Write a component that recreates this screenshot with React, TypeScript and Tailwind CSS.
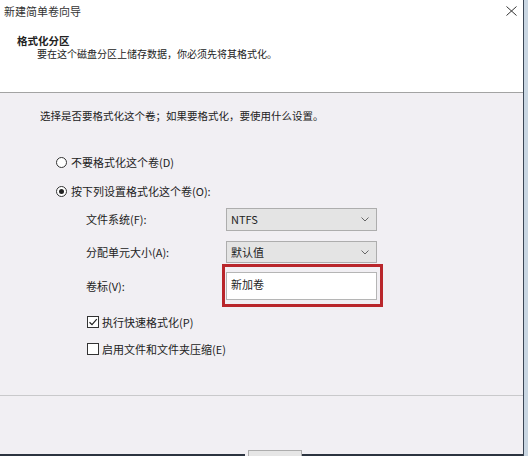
const font = { fontFamily: '"Microsoft YaHei", "Noto Sans CJK SC", "Noto Sans", sans-serif' }

function Radio({ checked }: { checked?: boolean }) {
  return (
    <span className="w-[11px] h-[11px] rounded-full border border-[#333] bg-white flex items-center justify-center">
      {checked && <span className="w-[5px] h-[5px] rounded-full bg-[#222]" />}
    </span>
  )
}

function Check({ checked }: { checked?: boolean }) {
  return (
    <span className="w-[12px] h-[12px] border border-[#333] bg-white flex items-center justify-center">
      {checked && (
        <svg width="10" height="10" viewBox="0 0 10 10">
          <path d="M1.5 5.2 L4 7.6 L8.8 2.2" fill="none" stroke="#222" strokeWidth="1.2" />
        </svg>
      )}
    </span>
  )
}

function Select({ value, h }: { value: string; h: string }) {
  return (
    <div className={`w-[151px] ${h} bg-[#e4e4e4] border border-[#adadad] flex items-center justify-between pl-[4px] pr-[7px]`}>
      <span className="text-[11px] text-[#222]">{value}</span>
      <svg width="8" height="5" viewBox="0 0 8 5">
        <path d="M0.5 0.5 L4 4 L7.5 0.5" fill="none" stroke="#666" strokeWidth="1" />
      </svg>
    </div>
  )
}

export default function App() {
  return (
    <div className="w-[528px] h-[456px] flex overflow-hidden text-[#222]" style={font}>
      <div className="w-[523px] flex flex-col">
        {/* title bar */}
        <div className="h-[22px] bg-white flex items-center justify-between pl-[4px] pr-[6px]">
          <span className="text-[11px] text-[#333]">新建简单卷向导</span>
          <svg width="11" height="10" viewBox="0 0 11 10">
            <path d="M0.5 0.5 L10.5 9.5 M10.5 0.5 L0.5 9.5" stroke="#333" strokeWidth="1" />
          </svg>
        </div>
        {/* header */}
        <div className="h-[71px] bg-white pt-[13px] pl-[17px] border-b border-[#a3a3a3]">
          <div className="text-[10.5px] leading-[12px] font-bold">格式化分区</div>
          <div className="text-[10px] leading-[14px] pl-[20px]">要在这个磁盘分区上储存数据，你必须先将其格式化。</div>
        </div>
        {/* body */}
        <div className="h-[303px] bg-[#f1eff3] flex flex-col border-b border-[#c9c9cb]">
          <div className="mt-[17px] pl-[40px] text-[10.5px] leading-[12px]">选择是否要格式化这个卷；如果要格式化，要使用什么设置。</div>
          <label className="mt-[33px] pl-[56px] h-[14px] flex items-center gap-[4px] text-[11px]">
            <Radio />
            <span>不要格式化这个卷(D)</span>
          </label>
          <label className="mt-[15px] pl-[56px] h-[14px] flex items-center gap-[4px] text-[11px]">
            <Radio checked />
            <span>按下列设置格式化这个卷(O):</span>
          </label>
          <div className="mt-[10px] pl-[86px] flex items-center">
            <span className="w-[140px] text-[11px]">文件系统(F):</span>
            <Select value="NTFS" h="h-[23px]" />
          </div>
          <div className="mt-[10px] pl-[86px] flex items-center">
            <span className="w-[140px] text-[11px]">分配单元大小(A):</span>
            <Select value="默认值" h="h-[22px]" />
          </div>
          <div className="mt-[9px] pl-[86px] flex items-center">
            <span className="w-[140px] text-[11px]">卷标(V):</span>
            <div className="relative">
              <div className="w-[151px] h-[28px] bg-white border border-[#b5b5b5] pl-[4px] pt-[3px] text-[11px]">新加卷</div>
              <div className="absolute -left-[4px] -right-[6px] -top-[8px] -bottom-[7px] border-[3px] border-[#b9262b]" />
            </div>
          </div>
          <label className="mt-[16px] pl-[87px] h-[12px] flex items-center gap-[3px] text-[11px]">
            <Check checked />
            <span>执行快速格式化(P)</span>
          </label>
          <label className="mt-[15px] pl-[87px] h-[12px] flex items-center gap-[3px] text-[11px]">
            <Check />
            <span>启用文件和文件夹压缩(E)</span>
          </label>
        </div>
        {/* footer */}
        <div className="flex-1 bg-[#f1eff3] flex items-end">
          <div className="w-[245px] h-[2px] bg-[#2c3440]" />
          <div className="ml-[3px] w-[54px] h-[6px] border border-b-0 border-[#adadad] bg-[#e6e6e6]" />
          <div className="flex-1 h-[2px] bg-[#2c3440]" />
        </div>
      </div>
      <div className="w-[5px] flex">
        <div className="w-[1px] bg-[#3a4656]" />
        <div className="flex-1 bg-[#c9d6e2]" />
      </div>
    </div>
  )
}
